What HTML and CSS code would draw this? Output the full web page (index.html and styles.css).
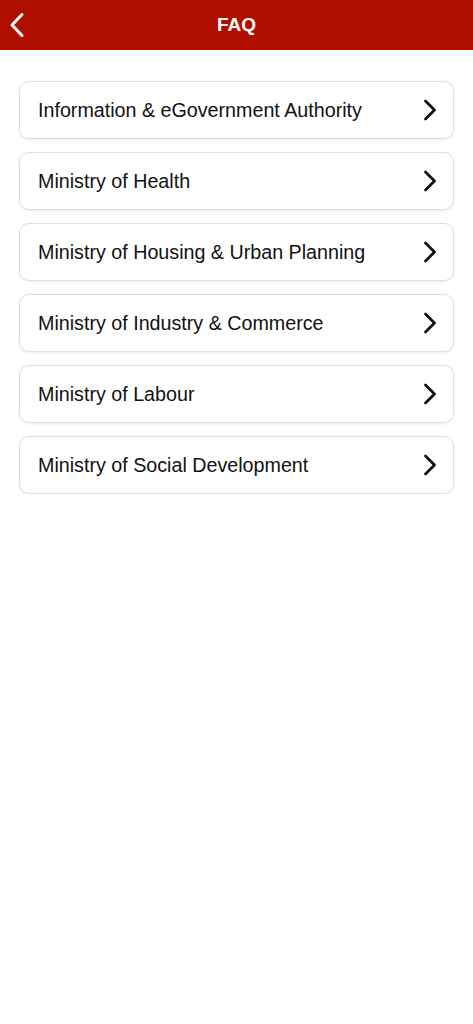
FILE: index.html
```html
<!DOCTYPE html>
<html lang="en">
<head>
	<meta charset="UTF-8">
	<title>FAQ</title>
	<link rel="stylesheet" href="styles.css">
</head>
<body>
	<div class="header">
		<a class="back" href="#">
			<svg width="16" height="26" viewBox="0 0 16 26"><path d="M13 2.5 L3 13 L13 23.5" fill="none" stroke="#fff" stroke-width="3" stroke-linecap="round" stroke-linejoin="round"/></svg>
		</a>
		<h1>FAQ</h1>
	</div>
	<ul class="list">
		<li><span>Information &amp; eGovernment Authority</span><svg class="arrow" width="14" height="22" viewBox="0 0 14 22"><path d="M2.5 2 L11.5 11 L2.5 20" fill="none" stroke="#111" stroke-width="2.8" stroke-linecap="round" stroke-linejoin="round"/></svg></li>
		<li><span>Ministry of Health</span><svg class="arrow" width="14" height="22" viewBox="0 0 14 22"><path d="M2.5 2 L11.5 11 L2.5 20" fill="none" stroke="#111" stroke-width="2.8" stroke-linecap="round" stroke-linejoin="round"/></svg></li>
		<li><span>Ministry of Housing &amp; Urban Planning</span><svg class="arrow" width="14" height="22" viewBox="0 0 14 22"><path d="M2.5 2 L11.5 11 L2.5 20" fill="none" stroke="#111" stroke-width="2.8" stroke-linecap="round" stroke-linejoin="round"/></svg></li>
		<li><span>Ministry of Industry &amp; Commerce</span><svg class="arrow" width="14" height="22" viewBox="0 0 14 22"><path d="M2.5 2 L11.5 11 L2.5 20" fill="none" stroke="#111" stroke-width="2.8" stroke-linecap="round" stroke-linejoin="round"/></svg></li>
		<li><span>Ministry of Labour</span><svg class="arrow" width="14" height="22" viewBox="0 0 14 22"><path d="M2.5 2 L11.5 11 L2.5 20" fill="none" stroke="#111" stroke-width="2.8" stroke-linecap="round" stroke-linejoin="round"/></svg></li>
		<li><span>Ministry of Social Development</span><svg class="arrow" width="14" height="22" viewBox="0 0 14 22"><path d="M2.5 2 L11.5 11 L2.5 20" fill="none" stroke="#111" stroke-width="2.8" stroke-linecap="round" stroke-linejoin="round"/></svg></li>
	</ul>
</body>
</html>
```
FILE: styles.css
```css
body{margin: 0;background: #fff;font-family: "Liberation Sans", Arial, sans-serif;}
.header{height: 50px;background: #b00f00;display: flex;align-items: center;justify-content: center;position: relative;}
.header h1{margin: 0;color: #fff;font-size: 19px;font-weight: bold;}
.back{position: absolute;left: 9px;top: 12px;display: block;}
.list{margin: 0;padding: 31px 19px 0;list-style: none;display: flex;flex-direction: column;gap: 13px;}
.list li{height: 56px;border: 1px solid #dedede;border-radius: 10px;box-shadow: 0 1px 3px rgba(0,0,0,0.08);display: flex;align-items: center;justify-content: space-between;padding: 0 16px 0 18px;}
.list li span{font-size: 19.7px;color: #111;}
.arrow{display: block;}
```
